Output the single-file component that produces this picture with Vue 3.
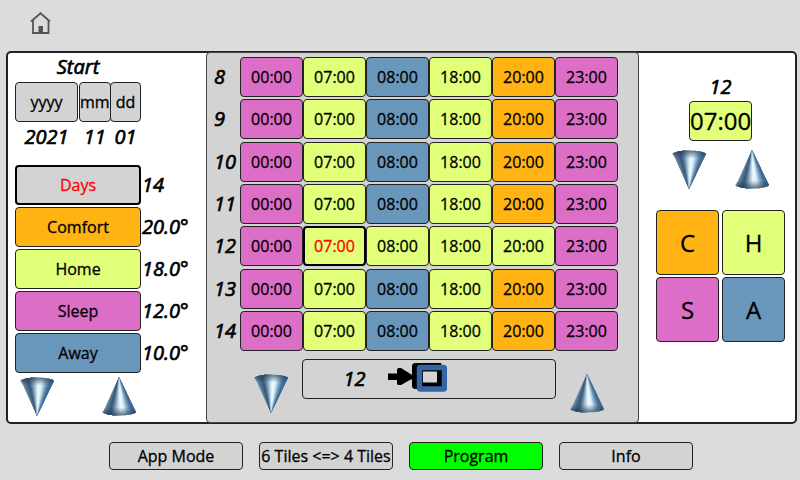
<script setup>
import { ref } from 'vue'

const modes = [
  { name: 'Comfort', key: 'C', cls: 'comfort', value: '20.0°' },
  { name: 'Home', key: 'H', cls: 'home', value: '18.0°' },
  { name: 'Sleep', key: 'S', cls: 'sleep', value: '12.0°' },
  { name: 'Away', key: 'A', cls: 'away', value: '10.0°' }
]

const times = ['00:00', '07:00', '08:00', '18:00', '20:00', '23:00']
const weekday = ['sleep', 'home', 'away', 'home', 'comfort', 'sleep']
const homeday = ['sleep', 'home', 'home', 'home', 'home', 'sleep']
const days = [8, 9, 10, 11, 12, 13, 14].map((n) => ({
  n,
  slots: times.map((time, i) => ({ time, mode: (n === 12 ? homeday : weekday)[i] }))
}))

const selectedDay = ref(12)
const selectedSlot = ref(1)
const pages = ['App Mode', '6 Tiles <=> 4 Tiles', 'Program', 'Info']
const page = ref('Program')

function select(day, slot) {
  selectedDay.value = day
  selectedSlot.value = slot
}

// The cones' metallic sheen: wedges that fan out from the apex.
const stops = [
  [0, [112, 143, 172]],
  [0.1, [82, 112, 142]],
  [0.24, [58, 86, 118]],
  [0.36, [112, 144, 172]],
  [0.48, [184, 210, 225]],
  [0.58, [236, 252, 255]],
  [0.7, [222, 242, 250]],
  [0.85, [130, 166, 196]],
  [1, [66, 106, 146]]
]
const steps = 34
const wedges = Array.from({ length: steps }, (_, i) => {
  const t = i / (steps - 1)
  const k = Math.max(1, stops.findIndex((s) => s[0] >= t))
  const [a, ca] = stops[k - 1]
  const [b, cb] = stops[k]
  const f = (t - a) / (b - a)
  const rgb = ca.map((c, j) => Math.round(c + (cb[j] - c) * f))
  return { d: `M17 -1 L${i - 1} 40 H37 Z`, fill: `rgb(${rgb})` }
})
</script>

<template>
  <div class="screen">
    <svg class="defs" width="0" height="0" aria-hidden="true">
      <defs>
        <linearGradient id="shade" x1="0" y1="0" x2="0" y2="1">
          <stop offset="0" stop-color="#3a5f85" stop-opacity="0.2" />
          <stop offset="0.35" stop-color="#3a5f85" stop-opacity="0" />
          <stop offset="0.78" stop-color="#1f3750" stop-opacity="0" />
          <stop offset="1" stop-color="#1f3750" stop-opacity="0.75" />
        </linearGradient>
        <clipPath id="cone-shape">
          <path d="M17 0 L34 35.500 Q28 38.500 17 38.500 Q6 38.500 0 35.500 Z" />
        </clipPath>
        <symbol id="cone-up" viewBox="0 0 34 39">
          <g clip-path="url(#cone-shape)">
            <path v-for="w in wedges" :key="w.d" :d="w.d" :fill="w.fill" />
            <rect width="34" height="39" fill="url(#shade)" />
          </g>
        </symbol>
        <symbol id="cone-down" viewBox="0 0 34 39">
          <g transform="matrix(1 0 0 -1 0 39)">
            <g clip-path="url(#cone-shape)">
              <path v-for="w in wedges" :key="w.d" :d="w.d" :fill="w.fill" />
              <rect width="34" height="39" fill="url(#shade)" />
            </g>
          </g>
        </symbol>
      </defs>
    </svg>

    <header class="top">
      <a class="home-link" href="#" aria-label="Home">
        <svg width="22" height="22" viewBox="0 0 22 22" fill="none" stroke="#555" stroke-width="1.800">
          <path d="M1 9.500 L10.500 1.300 L20 9.500" />
          <path d="M3 8.500 V21 H18.500 V8.500" />
          <path d="M8.500 21 V14 H13 V21 Z" fill="#555" stroke="none" />
        </svg>
      </a>
    </header>

    <main class="panel">
      <section class="left">
        <h2 class="title">Start</h2>
        <div class="dates">
          <div class="date">
            <button class="btn">yyyy</button>
            <span class="num">2021</span>
          </div>
          <div class="date">
            <button class="btn">mm</button>
            <span class="num">11</span>
          </div>
          <div class="date">
            <button class="btn">dd</button>
            <span class="num">01</span>
          </div>
        </div>
        <div class="settings">
          <button class="btn active">Days</button>
          <span class="num">14</span>
          <template v-for="m in modes" :key="m.name">
            <button class="btn" :class="m.cls">{{ m.name }}</button>
            <span class="num">{{ m.value }}</span>
          </template>
        </div>
        <div class="cones">
          <button class="cone" aria-label="Decrease"><svg><use href="#cone-down" /></svg></button>
          <button class="cone" aria-label="Increase"><svg><use href="#cone-up" /></svg></button>
        </div>
      </section>

      <section class="middle">
        <table>
          <tbody>
            <tr v-for="d in days" :key="d.n">
              <th scope="row" class="num">{{ d.n }}</th>
              <td v-for="(s, i) in d.slots" :key="i">
                <button
                  class="btn"
                  :class="[s.mode, { active: d.n === selectedDay && i === selectedSlot }]"
                  @click="select(d.n, i)"
                >{{ s.time }}</button>
              </td>
            </tr>
          </tbody>
        </table>
        <div class="copybar">
          <button class="cone" aria-label="Previous days"><svg><use href="#cone-down" /></svg></button>
          <button class="btn copy" aria-label="Copy day">
            <span class="num">{{ selectedDay }}</span>
            <svg width="60" height="30" viewBox="0 0 60 30">
              <path d="M1 11.500 H10 L10 7.500 Q10 6 12 6 H14 L22 11 Q26 13 26 15 Q26 17 22 18.500 L14 23 H12 Q10 23 10 21.500 V18 H1 Z" fill="#000" />
              <path d="M27 1 H54 L55 4 V27 H27 L25 25 V3 Z" fill="#000" />
              <path d="M34 8 H55 V24 H34 Z" fill="#000" />
              <rect x="32.500" y="5.500" width="25" height="21.500" rx="1" fill="none" stroke="#3465a4" stroke-width="5.500" />
              <rect x="36" y="9.500" width="14" height="11" fill="#d3d3d3" />
            </svg>
          </button>
          <button class="cone" aria-label="Next days"><svg><use href="#cone-up" /></svg></button>
        </div>
      </section>

      <section class="right">
        <span class="num">{{ selectedDay }}</span>
        <button class="btn home clock">{{ times[selectedSlot] }}</button>
        <div class="cones">
          <button class="cone" aria-label="Earlier"><svg><use href="#cone-down" /></svg></button>
          <button class="cone" aria-label="Later"><svg><use href="#cone-up" /></svg></button>
        </div>
        <div class="keys">
          <button v-for="m in modes" :key="m.key" class="btn" :class="m.cls" :aria-label="m.name">{{ m.key }}</button>
        </div>
      </section>
    </main>

    <nav class="pages">
      <button
        v-for="p in pages"
        :key="p"
        class="btn"
        :class="{ current: p === page }"
        @click="page = p"
      >{{ p }}</button>
    </nav>
  </div>
</template>

<style>
body {
  background: #dcdcdc;
}
</style>

<style scoped>
.screen {
  min-height: 100vh;
  box-sizing: border-box;
  font-family: "Open Sans", "Noto Sans", sans-serif;
  font-size: 16px;
  font-weight: 400;
  color: #000;
  background: #dcdcdc;
}
.screen * {
  box-sizing: border-box;
}
.defs {
  display: block;
}
.top {
  padding: 12px 30px 17px;
}
.home-link {
  display: flex;
  width: 22px;
  height: 22px;
}
.btn {
  display: block;
  height: 40px;
  padding: 0;
  border: 1px solid #222;
  border-radius: 4px;
  background: #d3d3d3;
  color: #000;
  font: inherit;
  line-height: 20px;
  text-align: center;
  white-space: nowrap;
  -webkit-text-stroke: 0.3px currentColor;
}
.comfort { background: #ffb414; }
.home { background: #e1ff78; }
.sleep { background: #dc6ec8; }
.away { background: #6996bb; }
.btn.active {
  border: 2px solid #000;
  color: #f00;
}
.num,
.title {
  font-size: 20px;
  font-style: italic;
  font-weight: 400;
  line-height: 24px;
  -webkit-text-stroke: 0.7px currentColor;
}
.cone {
  width: 34px;
  height: 39px;
  padding: 0;
  border: 0;
  background: none;
}
.cone svg {
  display: block;
  width: 34px;
  height: 39px;
}
.panel {
  display: grid;
  grid-template-columns: 198fr 433fr 156fr;
  margin: 0 3px 0 6px;
  border: 2px solid #222;
  border-radius: 5px;
  background: #fff;
}
.left {
  padding: 2px 0 0 7px;
}
.title {
  width: 126px;
  margin: 0 0 3px;
  text-align: center;
}
.dates {
  display: grid;
  grid-template-columns: 63px 30px 31px;
  gap: 1px;
}
.date {
  display: grid;
  justify-items: center;
  gap: 3px;
}
.date .btn {
  width: 100%;
}
.settings {
  display: grid;
  grid-template-columns: 126px 1fr;
  align-items: center;
  gap: 2px 1px;
  margin-top: 16px;
}
.left .cones {
  display: flex;
  gap: 48px;
  padding: 4px 5px 0;
}
.middle {
  margin: -1px 0;
  padding: 2px 20px 0 7px;
  border: 1px solid #444;
  border-radius: 4px;
  background: #d3d3d3;
}
table {
  width: 100%;
  height: 298px;
  table-layout: fixed;
  border-collapse: separate;
  border-spacing: 0 2px;
}
th, td {
  padding: 0;
}
th {
  width: 26px;
  text-align: left;
}
td .btn {
  width: 100%;
}
.copybar {
  display: grid;
  grid-template-columns: 34px 1fr 34px;
  gap: 14px;
  align-items: start;
  padding: 6px 14px 9px 40px;
}
.copybar .cone {
  margin-top: 15px;
}
.copy {
  display: flex;
  align-items: center;
  justify-content: center;
  gap: 21px;
  padding: 0 68px 0 0;
}
.copy svg {
  margin-bottom: 4px;
}
.right {
  display: flex;
  flex-direction: column;
  align-items: center;
  padding: 22px 10px 0 17px;
}
.clock {
  width: 63px;
  margin-top: 2px;
  font-size: 24px;
}
.right .cones {
  display: flex;
  gap: 29px;
  margin-top: 9px;
}
.keys {
  display: grid;
  grid-template-columns: 1fr 1fr;
  gap: 2px 3px;
  width: 100%;
  margin-top: 21px;
}
.keys .btn {
  height: 65px;
  font-size: 24px;
}
.pages {
  display: flex;
  justify-content: center;
  gap: 16px;
  padding: 18px 0 10px 2px;
}
.pages .btn {
  width: 134px;
  height: 28px;
}
.pages .current {
  background: #0f0;
}
</style>
